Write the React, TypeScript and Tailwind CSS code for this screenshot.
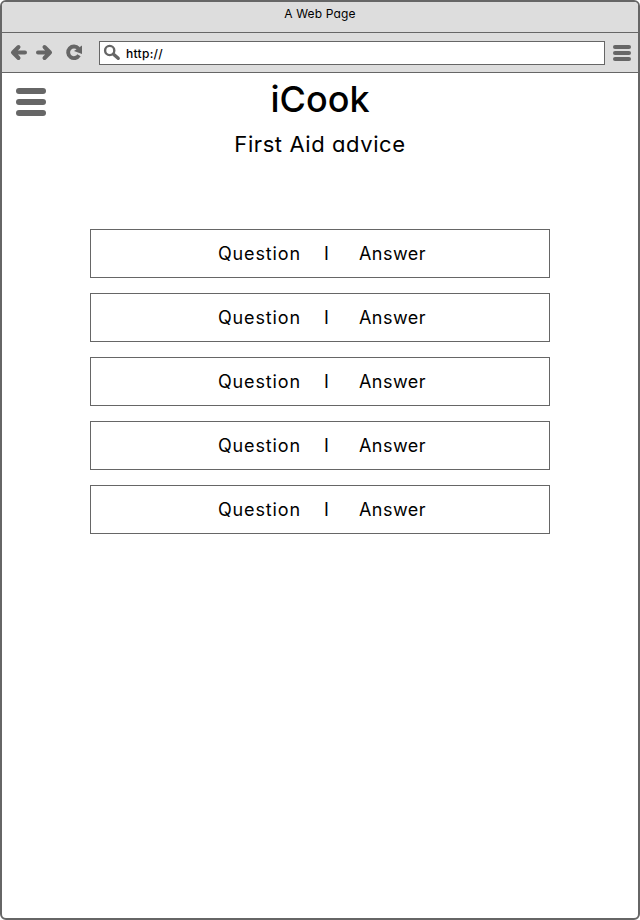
import React from "react";

const ROWS = [1, 2, 3, 4, 5];

function Bars({ className, barClass }: { className: string; barClass: string }) {
  return (
    <div className={`flex flex-col ${className}`}>
      <span className={barClass} />
      <span className={barClass} />
      <span className={barClass} />
    </div>
  );
}

export default function App() {
  return (
    <div className="flex h-[920px] w-[640px] flex-col overflow-hidden rounded-md border-2 border-[#666] bg-white font-['Inter',sans-serif] text-black [font-feature-settings:'cv11','ss03']">
      <header className="h-[31px] border-b border-[#666] bg-[#ddd] text-center text-[12px] leading-[23px] tracking-[0.15px]">
        A Web Page
      </header>
      <nav className="flex h-10 items-center border-b border-[#666] bg-[#ddd]">
        <svg width="97" height="39" viewBox="2 33 97 39" fill="none" stroke="#666">
          <path d="M25 52.5H13M18.5 47L13 52.5L18.5 58" strokeWidth="4" strokeLinecap="round" strokeLinejoin="round" />
          <path d="M38 52.5H50M44.5 47L50 52.5L44.5 58" strokeWidth="4" strokeLinecap="round" strokeLinejoin="round" />
          <path d="M78.4 48.6A5.8 5.8 0 1 0 79 55.2" strokeWidth="3.9" />
          <path d="M82 45.5V54L74 51Z" fill="#666" stroke="none" />
        </svg>
        <div className="flex h-6 w-[506px] items-center border border-[#666] bg-white">
          <svg width="26" height="22" viewBox="100 42 26 22" fill="none" stroke="#666">
            <circle cx="109.7" cy="50.5" r="4.6" strokeWidth="2.4" />
            <path d="M113.8 54.5L118.2 58.3" strokeWidth="3.4" strokeLinecap="round" />
          </svg>
          <span className="pt-0.5 text-[12px] leading-5 font-medium tracking-[0.3px]">http://</span>
        </div>
        <Bars className="ml-2 gap-0.5" barClass="h-1 w-[18px] rounded-full bg-[#666]" />
      </nav>
      <main className="relative flex flex-1 flex-col items-center">
        <Bars className="absolute top-[15px] left-3.5 gap-[5px]" barClass="h-1.5 w-[30px] rounded-full bg-[#666]" />
        <h1 className="mt-1 text-[36px] leading-[45px] font-medium">iCook</h1>
        <h2 className="mt-2 text-[22px] leading-[28px] tracking-[0.58px]">First Aid advice</h2>
        <ul className="mt-[71px] flex flex-col gap-[15px]">
          {ROWS.map((n) => (
            <li key={n} className="flex h-[49px] w-[460px] items-center border border-[#666] text-[18px]">
              <span className="ml-[127px] w-[106px] tracking-[0.85px]">Question</span>
              <span className="w-[35px]">I</span>
              <span className="tracking-[0.45px]">Answer</span>
            </li>
          ))}
        </ul>
      </main>
    </div>
  );
}
